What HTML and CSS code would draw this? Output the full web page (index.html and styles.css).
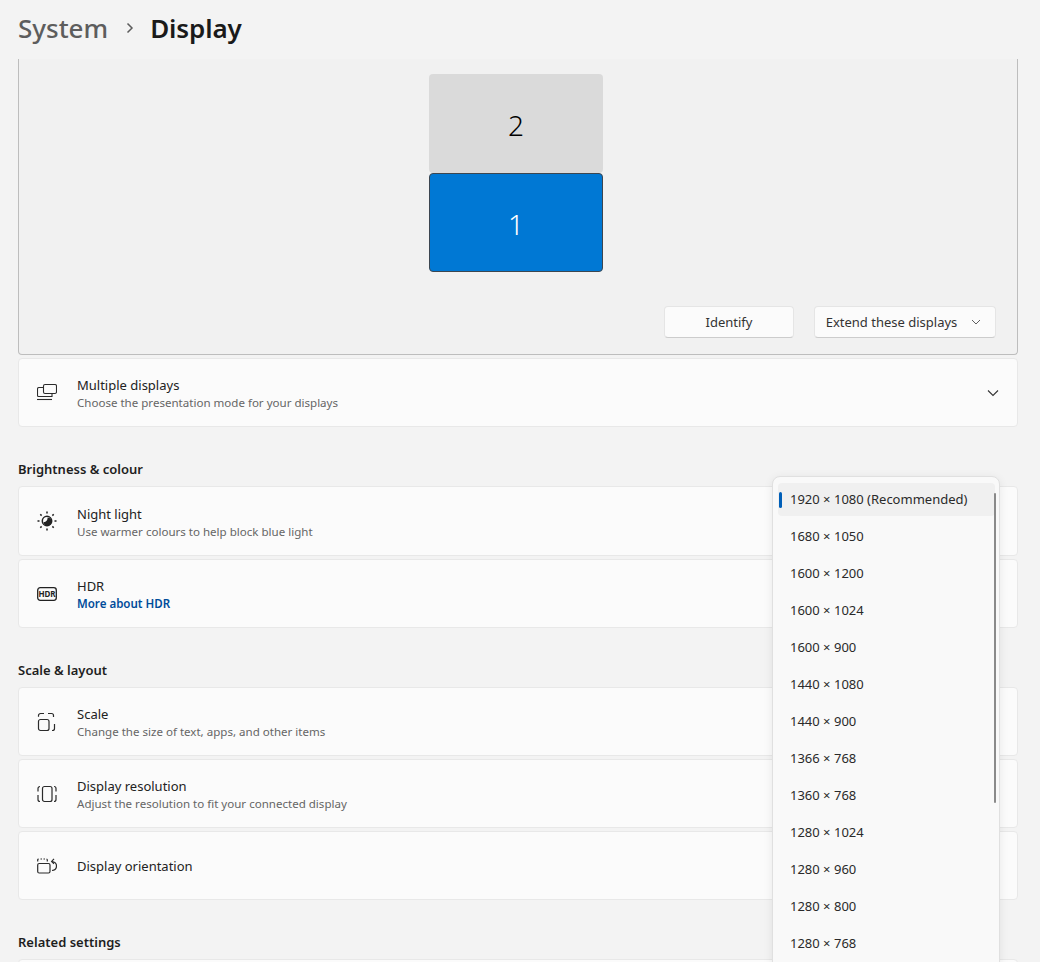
FILE: index.html
```html
<!DOCTYPE html>
<html lang="en">
<head>
<meta charset="utf-8">
<title>Display</title>
<link rel="stylesheet" href="styles.css">
</head>
<body>
<div class="window">
  <header class="crumbs">
    <span class="crumb-parent">System</span>
    <svg class="crumb-sep" width="12" height="12" viewBox="0 0 12 12"><path d="M3.500 1.500 8 6l-4.500 4.500" fill="none" stroke="#5c5c5c" stroke-width="1.500"/></svg>
    <span class="crumb-current">Display</span>
  </header>
  <main class="scroller">
    <section class="arrange">
      <div class="monitors">
        <div class="monitor monitor-two">2</div>
        <div class="monitor monitor-one">1</div>
      </div>
      <div class="arrange-actions">
        <button class="btn btn-identify">Identify</button>
        <button class="btn btn-extend">Extend these displays
          <svg width="10" height="10" viewBox="0 0 10 10"><path d="M1 3l4 4 4-4" fill="none" stroke="#5f5f5f" stroke-width="1"/></svg>
        </button>
      </div>
    </section>

    <div class="card card-first">
      <svg class="ico" width="20" height="20" viewBox="0 0 20 20" fill="none" stroke="#2b2b2b" stroke-width="1.100"><rect x="6.500" y="1.500" width="13" height="9" rx="1.500"/><path d="M6.500 4.500H2a1.500 1.500 0 0 0-1.500 1.500v6.500a1 1 0 0 0 1 1H15v-3"/><path d="M0 16.500h15"/></svg>
      <div class="card-text"><div class="card-title">Multiple displays</div><div class="card-sub">Choose the presentation mode for your displays</div></div>
      <svg class="card-chevron" width="12" height="12" viewBox="0 0 12 12"><path d="M1 3.500l5 5 5-5" fill="none" stroke="#333" stroke-width="1.100"/></svg>
    </div>

    <h2 class="section section-brightness">Brightness &amp; colour</h2>
    <div class="card card-tall">
      <svg class="ico" width="20" height="20" viewBox="0 0 20 20" fill="none" stroke="#222" stroke-width="1.500"><circle cx="10" cy="10" r="4.700"/><path d="M10.500 6.500a4 4 0 1 1-4 4.500c2 .5 4.500-2 4-4.500z" fill="#222" stroke="none"/><path d="M10 0.500v2M10 17.500v2M0.500 10h2M17.500 10h2M3.300 3.300l1.300 1.300M15.400 15.400l1.300 1.300M3.300 16.700l1.300-1.300M15.400 4.600l1.300-1.300"/></svg>
      <div class="card-text"><div class="card-title">Night light</div><div class="card-sub">Use warmer colours to help block blue light</div></div>
    </div>
    <div class="card">
      <svg class="ico" width="20" height="20" viewBox="0 0 20 20" fill="none"><rect x="0.700" y="3.700" width="18.600" height="12.600" rx="2.500" stroke="#222" stroke-width="1.300"/><text x="10" y="13" class="hdr-mark" text-anchor="middle">HDR</text></svg>
      <div class="card-text"><div class="card-title">HDR</div><div class="card-link">More about HDR</div></div>
    </div>

    <h2 class="section section-scale">Scale &amp; layout</h2>
    <div class="card">
      <svg class="ico" width="20" height="20" viewBox="0 0 20 20" fill="none" stroke="#2b2b2b" stroke-width="1.200"><rect x="1.500" y="7.500" width="10.500" height="11" rx="2"/><path d="M1.500 4.800V3.500a2 2 0 0 1 2-2h3.500M11 1.500h3.500a2 2 0 0 1 2 2v1.500M17.500 12v4.500a2 2 0 0 1-2 2H15"/></svg>
      <div class="card-text"><div class="card-title">Scale</div><div class="card-sub">Change the size of text, apps, and other items</div></div>
    </div>
    <div class="card">
      <svg class="ico" width="20" height="20" viewBox="0 0 20 20" fill="none" stroke="#2b2b2b" stroke-width="1.200"><rect x="5.500" y="2.500" width="9.500" height="15" rx="2"/><path d="M3 2.500a2 2 0 0 0-2 2v3M1 11v4.500a2 2 0 0 0 2 2M17 2.500a2 2 0 0 1 2 2v3M19 11v4.500a2 2 0 0 1-2 2"/></svg>
      <div class="card-text"><div class="card-title">Display resolution</div><div class="card-sub">Adjust the resolution to fit your connected display</div></div>
    </div>
    <div class="card">
      <svg class="ico" width="20" height="20" viewBox="0 0 20 20" fill="none" stroke="#2b2b2b" stroke-width="1.200"><rect x="0.700" y="7.500" width="12.300" height="9.500" rx="1.500"/><path d="M0.700 5.500V4a1 1 0 0 1 1-1M3.500 3h1.500M6.500 3H8M9.500 3a1 1 0 0 1 .8 1v1.500M15 5.500c2.800.4 4.500 2.200 4.500 4.500s-1.700 4.100-4.500 4.500M17 2.800l-2.400 2.600 2.400 2.400"/></svg>
      <div class="card-text"><div class="card-title">Display orientation</div></div>
    </div>

    <h2 class="section section-related">Related settings</h2>
    <div class="card"></div>
  </main>

  <div class="popup">
    <div class="scrollbar"></div>
    <div class="opt opt-selected">1920 × 1080 (Recommended)</div>
    <div class="opt">1680 × 1050</div>
    <div class="opt">1600 × 1200</div>
    <div class="opt">1600 × 1024</div>
    <div class="opt">1600 × 900</div>
    <div class="opt">1440 × 1080</div>
    <div class="opt">1440 × 900</div>
    <div class="opt">1366 × 768</div>
    <div class="opt">1360 × 768</div>
    <div class="opt">1280 × 1024</div>
    <div class="opt">1280 × 960</div>
    <div class="opt">1280 × 800</div>
    <div class="opt">1280 × 768</div>
  </div>
</div>
</body>
</html>
```

FILE: styles.css
```css
* { box-sizing: border-box; }
html, body { margin: 0; height: 100%; }
body {
  background: #f3f3f3;
  color: #1b1b1b;
  font-family: "Noto Sans", "Open Sans", sans-serif;
  overflow: hidden;
}
.window { position: relative; width: 1040px; height: 962px; overflow: hidden; }

.crumbs { height: 59px; padding: 0 0 4px 18px; display: flex; align-items: center; }
.crumb-parent { font-size: 26px; color: #5d5d5d; font-weight: 500; line-height: 40px; }
.crumb-sep { margin: 0 14px 0 16px; }
.crumb-current { font-size: 26px; color: #1a1a1a; font-weight: 600; line-height: 40px; letter-spacing: -0.1px; }

.scroller { height: 903px; overflow: hidden; padding: 0 22px 0 18px; }

.arrange {
  height: 296px;
  background: #f1f1f1;
  border: 1px solid #bdbdbd;
  border-top: 0;
  border-radius: 0 0 4px 4px;
  padding-top: 15px;
}
.monitors { width: 174px; margin-left: 410px; }
.monitor {
  height: 99px;
  padding-top: 2px;
  display: flex; align-items: center; justify-content: center;
  font-size: 28px;
  font-weight: 300;
  border-radius: 4px;
}
.monitor-two { background: #dadada; color: #000; }
.monitor-one { background: #0078d4; color: #fff; border: 1px solid #3c4650; }

.arrange-actions { display: flex; justify-content: flex-end; gap: 20px; padding-right: 21px; margin-top: 34px; }
.btn {
  height: 32px;
  background: #fbfbfb;
  border: 1px solid #e5e5e5;
  border-bottom-color: #cccccc;
  border-radius: 4px;
  font: 400 13px "Noto Sans", "Open Sans", sans-serif;
  color: #333;
  display: flex; align-items: center; justify-content: center;
  padding: 0;
}
.btn-identify { width: 130px; }
.btn-extend { width: 182px; gap: 14px; padding-right: 3px; }

.card {
  height: 69px;
  background: #fbfbfb;
  border: 1px solid #e8e8e8;
  border-radius: 4px;
  margin-top: 3px;
  padding-left: 18px;
  display: flex; align-items: center;
}
.card-tall { height: 70px; }
.ico { flex: none; margin-right: 20px; }
.card-text { flex: 1; }
.card-title { font-size: 13px; line-height: 18px; color: #222; }
.card-title:not(:only-child) { margin-top: 2px; }
.card-sub { font-size: 11.550px; line-height: 17px; color: #666; }
.card-link { font-size: 11.550px; line-height: 17px; color: #004c9a; font-weight: 600; }
.card-chevron { margin-right: 18px; }
.hdr-mark { font: 700 8px "Noto Sans", sans-serif; fill: #222; }

.section { margin: 0; font-size: 13px; font-weight: 600; line-height: 18px; color: #1e1e1e; }
.section-brightness { margin-top: 33px; margin-bottom: 8px; }
.section-scale { margin-top: 33px; margin-bottom: 8px; }
.section-related { margin-top: 33px; margin-bottom: 8px; }

.popup {
  position: absolute;
  left: 772px; top: 476px;
  width: 228px; height: 500px;
  background: #f9f9f9;
  border: 1px solid #e0e0e0;
  border-radius: 8px;
  padding: 6px 4px 0 5px;
  box-shadow: 0 2px 10px rgba(0,0,0,.08);
}
.opt {
  height: 33px;
  margin-bottom: 4px;
  padding: 0 0 2px 12px;
  display: flex; align-items: center;
  font-size: 13px;
  color: #2a2a2a;
  border-radius: 4px;
  position: relative;
}
.opt-selected { background: #f0f0f0; }
.opt-selected::before {
  content: "";
  position: absolute;
  left: 1px; top: 9px;
  width: 3px; height: 16px;
  background: #005fb8;
  border-radius: 2px;
}
.scrollbar {
  position: absolute;
  left: 221px; top: 16px;
  width: 2px; height: 310px;
  background: #8a8a8a;
  border-radius: 1px;
  z-index: 1;
}
```
